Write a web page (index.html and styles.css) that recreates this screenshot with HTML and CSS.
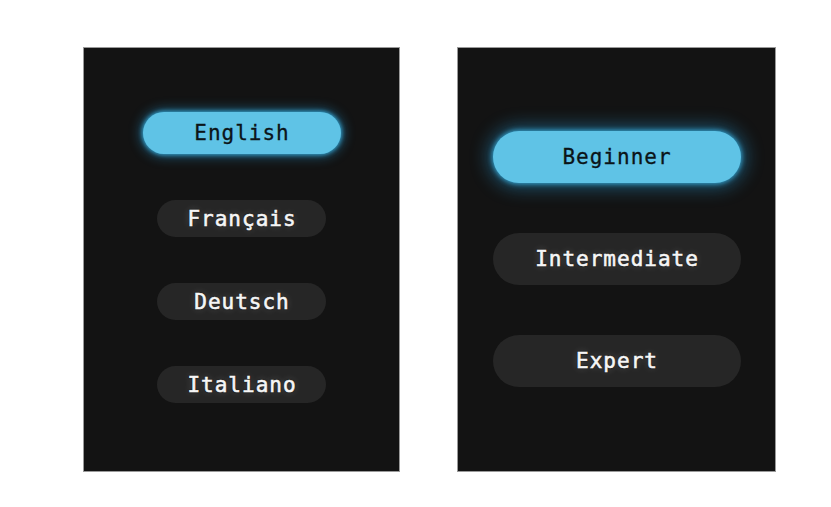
FILE: index.html
```html
<!DOCTYPE html>
<html lang="en">
<head>
  <meta charset="UTF-8" />
  <meta name="viewport" content="width=device-width, initial-scale=1.0"/>
  <title>Option pickers</title>
  <link rel="stylesheet" href="styles.css">
</head>
<body>
  <div class="screens">
    <div class="panel panel-lang">
      <button class="option selected">English</button>
      <button class="option">Français</button>
      <button class="option">Deutsch</button>
      <button class="option">Italiano</button>
    </div>

    <div class="panel panel-level">
      <button class="option selected">Beginner</button>
      <button class="option">Intermediate</button>
      <button class="option">Expert</button>
    </div>
  </div>
</body>
</html>
```

FILE: styles.css
```css
* {
  box-sizing: border-box;
  margin: 0;
  padding: 0;
  font-family: 'DejaVu Sans Mono', 'Liberation Mono', monospace;
}

body {
  background: #ffffff;
  min-height: 100vh;
}

.screens {
  display: flex;
  gap: 57px;
  padding: 47px 0 0 83px;
}

.panel {
  background: #131313;
  border: 1px solid #9a9a9a;
  height: 425px;
  display: flex;
  flex-direction: column;
  align-items: center;
}

.panel-lang {
  width: 317px;
  padding-top: 64px;
  gap: 46px;
}

.panel-level {
  width: 319px;
  padding-top: 83px;
  gap: 50px;
}

.option {
  border: none;
  border-radius: 999px;
  background: #262626;
  color: #f6f6f6;
  font-size: 21px;
  font-weight: normal;
  letter-spacing: 1px;
  text-indent: 1px;
  -webkit-text-stroke: 0.6px #f6f6f6;
  text-shadow: 0 0 2px #000, 0 0 7px rgba(255, 255, 255, 0.25);
  cursor: pointer;
}

.option.selected {
  background: #5fc3e6;
  color: #0b1418;
  -webkit-text-stroke: 0.3px #0b1418;
  text-shadow: none;
  box-shadow: 0 0 4px 1px rgba(60, 185, 235, 0.8), 0 0 12px 3px rgba(40, 160, 220, 0.45);
}

.panel-lang .option {
  width: 169px;
  height: 37px;
}

.panel-lang .option.selected {
  width: 198px;
  height: 42px;
}

.panel-level .option {
  width: 248px;
  height: 52px;
}

.panel-level .option.selected {
  box-shadow: 0 0 5px 1px rgba(60, 185, 235, 0.8), 0 0 18px 5px rgba(40, 160, 220, 0.45);
}
```
